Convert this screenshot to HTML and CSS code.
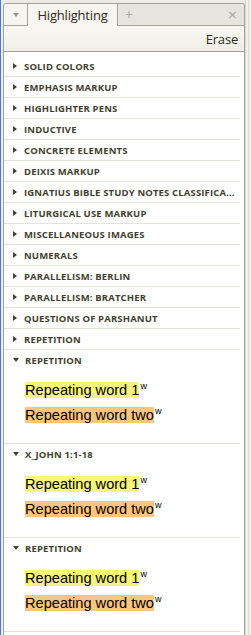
FILE: index.html
```html
<!DOCTYPE html>
<html>
<head>
<meta charset="utf-8">
<link rel="stylesheet" href="styles.css">
</head>
<body>
<div class="frame">
  <div class="edge-blue"></div>
  <div class="edge-gap"></div>
  <div class="panel">
    <div class="tabbar">
      <div class="tab-menu"><span class="menu-caret"></span></div>
      <div class="tab tab-active">Highlighting</div>
      <div class="tab-new">+</div>
      <div class="tab-rest"><span class="tab-close">×</span></div>
    </div>
    <div class="toolbar"><span class="erase">Erase</span></div>
    <div class="list">
      <div class="row"><span class="tri tri-right"></span><span class="label">SOLID COLORS</span></div>
      <div class="row"><span class="tri tri-right"></span><span class="label">EMPHASIS MARKUP</span></div>
      <div class="row"><span class="tri tri-right"></span><span class="label">HIGHLIGHTER PENS</span></div>
      <div class="row"><span class="tri tri-right"></span><span class="label">INDUCTIVE</span></div>
      <div class="row"><span class="tri tri-right"></span><span class="label">CONCRETE ELEMENTS</span></div>
      <div class="row"><span class="tri tri-right"></span><span class="label">DEIXIS MARKUP</span></div>
      <div class="row"><span class="tri tri-right"></span><span class="label">IGNATIUS BIBLE STUDY NOTES CLASSIFICA...</span></div>
      <div class="row"><span class="tri tri-right"></span><span class="label">LITURGICAL USE MARKUP</span></div>
      <div class="row"><span class="tri tri-right"></span><span class="label">MISCELLANEOUS IMAGES</span></div>
      <div class="row"><span class="tri tri-right"></span><span class="label">NUMERALS</span></div>
      <div class="row"><span class="tri tri-right"></span><span class="label">PARALLELISM: BERLIN</span></div>
      <div class="row"><span class="tri tri-right"></span><span class="label">PARALLELISM: BRATCHER</span></div>
      <div class="row"><span class="tri tri-right"></span><span class="label">QUESTIONS OF PARSHANUT</span></div>
      <div class="row"><span class="tri tri-right"></span><span class="label">REPETITION</span></div>

      <div class="section">
        <div class="row row-open"><span class="tri tri-down"></span><span class="label">REPETITION</span></div>
        <div class="words">
          <div class="word"><span class="hl hl-yellow">Repeating word 1</span><sup class="w">w</sup></div>
          <div class="word"><span class="hl hl-orange">Repeating word two</span><sup class="w">w</sup></div>
        </div>
      </div>
      <div class="section">
        <div class="row row-open"><span class="tri tri-down"></span><span class="label">X_JOHN 1:1-18</span></div>
        <div class="words">
          <div class="word"><span class="hl hl-yellow">Repeating word 1</span><sup class="w">w</sup></div>
          <div class="word"><span class="hl hl-orange">Repeating word two</span><sup class="w">w</sup></div>
        </div>
      </div>
      <div class="section">
        <div class="row row-open"><span class="tri tri-down"></span><span class="label">REPETITION</span></div>
        <div class="words">
          <div class="word"><span class="hl hl-yellow">Repeating word 1</span><sup class="w">w</sup></div>
          <div class="word"><span class="hl hl-orange">Repeating word two</span><sup class="w">w</sup></div>
        </div>
      </div>
    </div>
  </div>
  <div class="edge-right"></div>
</div>
</body>
</html>
```
FILE: styles.css
```css
html, body {
  margin: 0;
  padding: 0;
  background: #ffffff;
  overflow: hidden;
}
.frame {
  display: flex;
  height: 635px;
  width: 251px;
  background: #ecebe6;
}
.edge-blue {
  width: 1px;
  background: #3d7fd9;
}
.edge-gap {
  width: 2px;
  background: #ecebe6;
}
.panel {
  width: 240px;
  margin-top: 3px;
  border: 1px solid #a5a397;
  border-bottom: none;
  border-radius: 3px 3px 0 0;
  background: #ffffff;
  display: flex;
  flex-direction: column;
  overflow: hidden;
}
.edge-right {
  width: 6px;
  background: linear-gradient(to right, #d9d8d0 0, #d9d8d0 1px, #f2f1ec 1px, #f2f1ec 3px, #dedcd4 3px, #dedcd4 4px, #f0efea 4px);
}
.tabbar {
  display: flex;
  height: 22px;
  background: #e6e5dd;
  font-family: "Open Sans", sans-serif;
}
.tab-menu {
  width: 23px;
  border-right: 1px solid #a5a397;
  border-bottom: 1px solid #a5a397;
  background: #f6f5f0;
  display: flex;
  align-items: center;
  justify-content: center;
}
.menu-caret {
  width: 0;
  height: 0;
  border-left: 3px solid transparent;
  border-right: 3px solid transparent;
  border-top: 4px solid #9a988e;
}
.tab-active {
  width: 89px;
  border-right: 1px solid #a5a397;
  background: #f6f5f0;
  color: #2f2c22;
  font-size: 13px;
  display: flex;
  align-items: center;
  justify-content: center;
  letter-spacing: -0.2px;
}
.tab-new {
  width: 22px;
  border-bottom: 1px solid #a5a397;
  color: #a9a79d;
  font-size: 14px;
  display: flex;
  align-items: center;
  justify-content: center;
}
.tab-rest {
  flex: 1;
  border-bottom: 1px solid #a5a397;
  display: flex;
  align-items: center;
  justify-content: flex-end;
  padding-right: 6px;
}
.tab-close {
  color: #a9a79d;
  font-size: 13px;
  font-family: "DejaVu Sans", sans-serif;
}
.toolbar {
  height: 26px;
  background: linear-gradient(#f8f7f2, #efeee6);
  border-bottom: 1px solid #a5a397;
  display: flex;
  align-items: center;
  justify-content: flex-end;
  padding-right: 6px;
  box-sizing: border-box;
}
.erase {
  font-family: "Open Sans", sans-serif;
  font-size: 13px;
  color: #2f2c22;
  letter-spacing: -0.2px;
}
.list {
  padding-top: 4px;
}
.row {
  height: 20px;
  border-bottom: 1px solid #e3e2dd;
  margin-right: 4px;
  display: flex;
  align-items: center;
  padding-left: 9px;
  font-family: "Open Sans", sans-serif;
  font-weight: bold;
  font-size: 9.5px;
  letter-spacing: 0.15px;
  color: #433f2f;
  white-space: nowrap;
  overflow: hidden;
}
.row-open {
  border-bottom: none;
}
.tri {
  width: 0;
  height: 0;
  flex: none;
  margin-right: 7px;
}
.tri-right {
  border-top: 3px solid transparent;
  border-bottom: 3px solid transparent;
  border-left: 4px solid #433f2f;
}
.tri-down {
  border-left: 3px solid transparent;
  border-right: 3px solid transparent;
  border-top: 4px solid #433f2f;
  margin-right: 6px;
}
.label {
  overflow: hidden;
}
.section {
  border-bottom: 1px solid #e3e2dd;
  margin-right: 4px;
}
.section .row {
  margin-right: 0;
}
.words {
  padding: 12px 0 20px 21px;
  display: flex;
  flex-direction: column;
  gap: 9px;
}
.word {
  height: 16px;
  line-height: 16px;
  font-family: "Liberation Sans", Arial, sans-serif;
  font-size: 14.6px;
  color: #000;
  display: flex;
}
.hl-yellow {
  background: #f7f57c;
}
.hl-orange {
  background: #fdc57e;
}
.w {
  font-size: 9px;
  line-height: 9px;
  vertical-align: top;
  margin-left: 1px;
}
```
